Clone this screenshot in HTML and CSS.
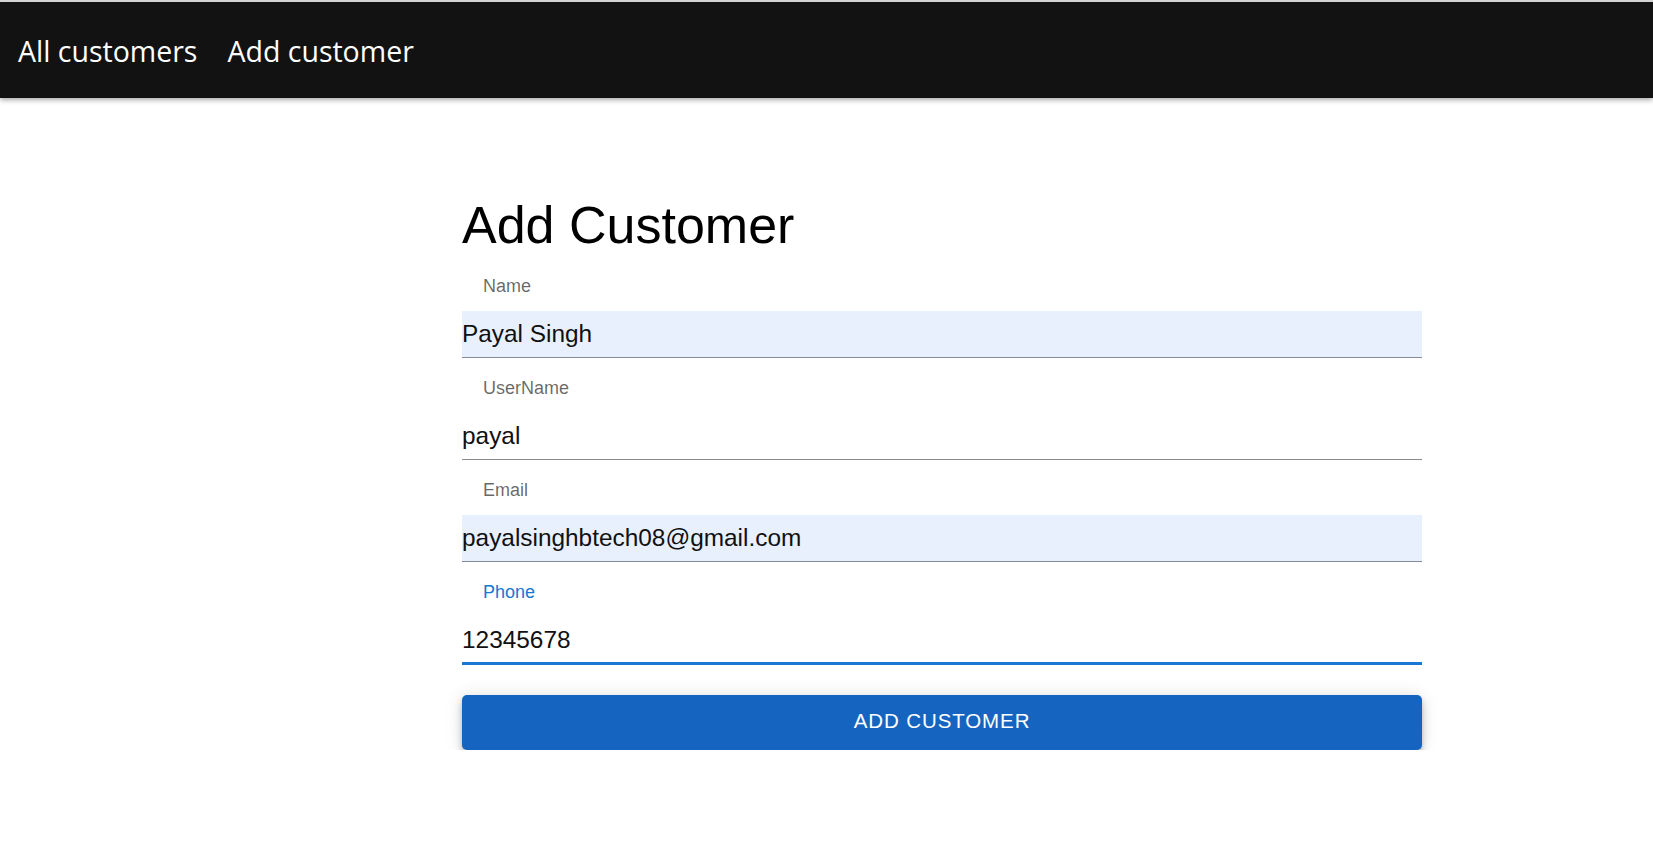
FILE: index.html
```html
<!DOCTYPE html>
<html>
<head>
<meta charset="utf-8">
<title>Add Customer</title>
<link rel="stylesheet" href="styles.css">
</head>
<body>
<nav class="navbar">
  <a class="nav-link" href="#">All customers</a>
  <a class="nav-link" href="#">Add customer</a>
</nav>
<main class="page">
  <form class="form">
    <h1 class="title">Add Customer</h1>
    <div class="field">
      <label class="label">Name</label>
      <input class="input filled" type="text" value="Payal Singh">
    </div>
    <div class="field">
      <label class="label">UserName</label>
      <input class="input" type="text" value="payal">
    </div>
    <div class="field">
      <label class="label">Email</label>
      <input class="input filled" type="text" value="payalsinghbtech08@gmail.com">
    </div>
    <div class="field">
      <label class="label focused">Phone</label>
      <input class="input active" type="text" value="12345678">
    </div>
    <button class="btn" type="button">ADD CUSTOMER</button>
  </form>
</main>
</body>
</html>
```

FILE: styles.css
```css
html, body {
  margin: 0;
  padding: 0;
  background: #ffffff;
  font-family: "Liberation Sans", Arial, sans-serif;
}

.navbar {
  display: flex;
  align-items: center;
  gap: 30px;
  height: 96px;
  padding-left: 18px;
  background: #121212;
  border-top: 2px solid #d4d4d4;
  box-shadow: 0 2px 5px rgba(0, 0, 0, 0.35);
}

.nav-link {
  color: #ffffff;
  text-decoration: none;
  font-family: "Open Sans", "Noto Sans", sans-serif;
  font-size: 28.5px;
  line-height: 36px;
  padding-top: 2px;
}

.page {
  padding-left: 462px;
}

.form {
  width: 960px;
  display: flex;
  flex-direction: column;
}

.title {
  margin: 97px 0 20px 0;
  font-size: 52px;
  line-height: 60px;
  font-weight: 400;
  color: #000000;
}

.field {
  display: flex;
  flex-direction: column;
  margin-bottom: 19px;
}

.label {
  font-size: 18px;
  line-height: 22px;
  padding: 0 0 14px 21px;
  color: rgba(0, 0, 0, 0.6);
}

.label.focused {
  color: #1976d2;
}

.input {
  box-sizing: border-box;
  height: 47px;
  margin: 0;
  padding: 0;
  border: none;
  border-bottom: 1px solid #8a8a8a;
  outline: none;
  background: transparent;
  font-family: "Liberation Sans", Arial, sans-serif;
  font-size: 24.4px;
  color: #111111;
}

.input.filled {
  background: #e8f0fe;
  border-bottom-color: #858a96;
}

.input.active {
  height: 48px;
  border-bottom: 3px solid #1976d2;
}

.btn {
  margin-top: 11px;
  height: 55px;
  padding: 0 0 3px 0;
  border: none;
  border-radius: 5px;
  background: #1565c0;
  color: #ffffff;
  font-family: "Liberation Sans", Arial, sans-serif;
  font-size: 20.5px;
  letter-spacing: 0.9px;
  box-shadow: 0 3px 5px -1px rgba(0,0,0,0.2), 0 6px 10px 0 rgba(0,0,0,0.14), 0 1px 18px 0 rgba(0,0,0,0.12);
  cursor: pointer;
}
```
